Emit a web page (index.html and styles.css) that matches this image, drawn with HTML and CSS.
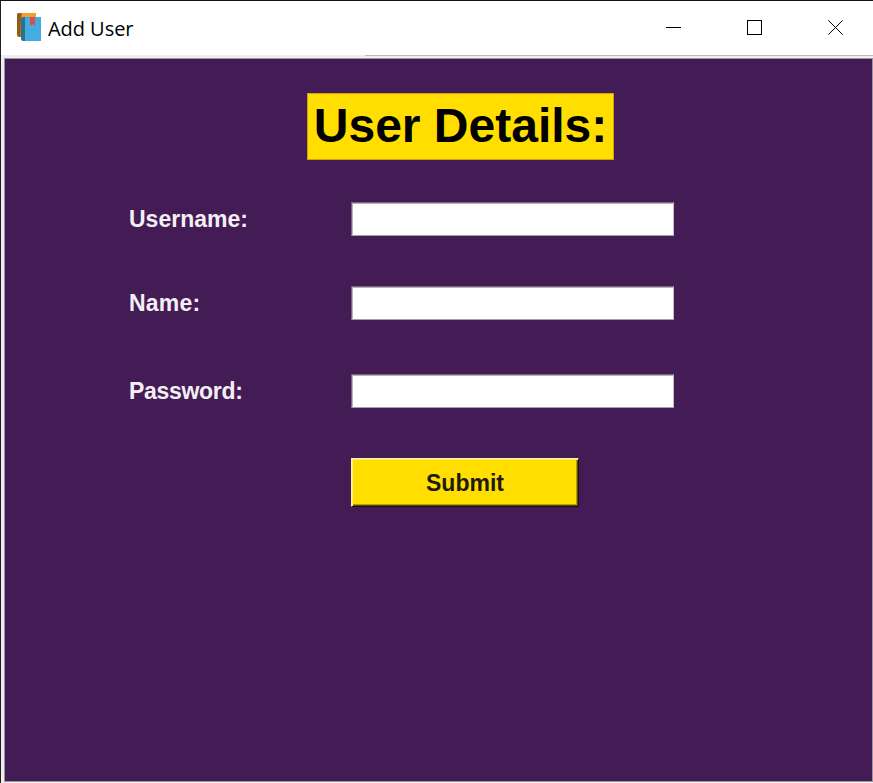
FILE: index.html
```html
<!DOCTYPE html>
<html lang="en">
<head>
<meta charset="utf-8">
<title>Add User</title>
<link rel="stylesheet" href="styles.css">
</head>
<body>
<div class="window">
  <header class="titlebar">
    <svg class="app-icon" width="27" height="30" viewBox="0 0 27 30">
      <path d="M1 2q0-1 2-1h3v24H3q-2 0-2-3z" fill="#8f5d13"/>
      <path d="M5 1h15v10H5z" fill="#f0a02c"/>
      <path d="M5 1h1v24H4z" fill="#c47b1c"/>
      <path d="M5 7q0-2 3-2h17v24H8q-3 0-3-3z" fill="#45ace0"/>
      <path d="M5 7q0-2 3-2h1v24H8q-3 0-3-3z" fill="#2b7193"/>
      <path d="M14 5h5v9l-2.500-2-2.500 2z" fill="#df4b50"/>
    </svg>
    <span class="title">Add User</span>
    <svg class="controls" width="178" height="17" viewBox="0 0 178 17" fill="none" stroke="#000">
      <path d="M0 8.500h15M81.500 1.500h14v14h-14z" shape-rendering="crispEdges"/>
      <path d="M162.300 1.300l14.400 14.400M176.700 1.300l-14.400 14.400"/>
    </svg>
  </header>
  <div class="seam"></div>
  <main class="client">
    <h1 class="heading"><span>User Details:</span></h1>
    <form class="form">
      <label for="username">Username:</label><input id="username" type="text">
      <label for="name">Name:</label><input id="name" type="text">
      <label for="password">Password:</label><input id="password" type="password">
      <button type="button"><span>Submit</span></button>
    </form>
  </main>
</div>
</body>
</html>
```
FILE: styles.css
```css
* { box-sizing: border-box; }
body {
  margin: 0;
  width: 873px;
  height: 783px;
  overflow: hidden;
  background: #f0eeee;
  font-family: "Liberation Sans", Arial, sans-serif;
}
.window {
  height: 783px;
  border-top: 1px solid #1a1115;
  border-left: 1px solid #241b20;
}
.titlebar {
  height: 54px;
  display: flex;
  background: #fff;
}
.app-icon { margin: 11px 0 0 15px; flex: none; }
.title {
  margin: 14px 0 0 5px;
  width: 100px;
  font: 20px/27px "Open Sans", sans-serif;
  letter-spacing: -0.05px;
  white-space: nowrap;
  color: #000;
}
.controls { margin: 18px 29px 0 auto; flex: none; }
.seam {
  height: 1px;
  margin-left: 364px;
  background: #b9bbb9;
}
.client {
  margin: 2px 0 0 3px;
  height: 724px;
  border: 1px solid #a092a5;
  background: #441c55;
}
.heading {
  width: 307px;
  height: 67px;
  margin: 34px 0 0 302px;
  border: 1px solid #c9a512;
  background: #ffde00;
  color: #000;
  font-size: 48px;
  line-height: 64px;
  text-align: center;
  white-space: nowrap;
}
.form {
  display: grid;
  grid-template-columns: 222px 323px;
  grid-template-rows: 34px 34px 34px 49px;
  row-gap: 50px;
  margin: 42px 0 0 124px;
}
label {
  font-weight: bold;
  font-size: 23px;
  line-height: 34px;
  color: #f4eff5;
}
label[for="name"] { letter-spacing: 0.2px; }
label[for="password"] { letter-spacing: -0.3px; }
input {
  width: 323px;
  height: 34px;
  padding: 2px 4px;
  border: 1px solid;
  border-color: #786681 #c5bdc9 #a79cac #786681;
  border-radius: 0;
  outline: 0;
  background: #fff;
  box-shadow: inset 1px 1px #b8b4b9;
  font: 22px "Liberation Sans", sans-serif;
}
label[for="password"], #password { margin-top: 4px; }
input { margin-left: -0.4px; }
button {
  grid-column: 2;
  width: 228px;
  height: 49px;
  margin-top: 4px;
  padding: 1px 0 0;
  border: 1px solid;
  border-color: #fff3a5 #1b0b20 #1b0b20 #fff3a5;
  background: #ffde00;
  box-shadow: inset 1px 1px #fff07b, inset -1px -1px #5c4c08, inset -2px -2px #b59d00;
  color: #201a08;
  font: bold 23px "Liberation Sans", sans-serif;
}
```
